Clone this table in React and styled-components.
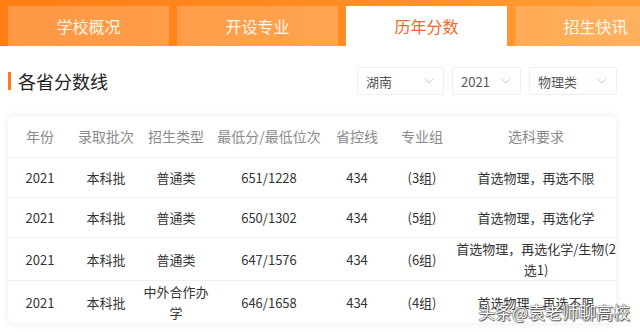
import React from "react";
import styled, { createGlobalStyle } from "styled-components";

const Global = createGlobalStyle`
  html, body { margin: 0; padding: 0; background: #fff; }
  body { font-family: "Noto Sans CJK SC", "Noto Sans", sans-serif; }
`;

const Page = styled.div`
  position: relative;
  width: 640px;
  height: 332px;
  overflow: hidden;
  background: #fff;
`;

const TabBar = styled.div`
  display: flex;
  gap: 8px;
  height: 46px;
  box-sizing: border-box;
  padding: 6px 0 0 8px;
  background: linear-gradient(90deg, #ff7d14 0%, #ff8c22 50%, #ff9d36 100%);
  overflow: hidden;
`;

const Tab = styled.div`
  flex: 0 0 161px;
  height: 40px;
  display: flex;
  align-items: center;
  justify-content: center;
  font-size: 16px;
  color: ${(p) => (p.$active ? "#f2692c" : "#fff6ec")};
  background: ${(p) => (p.$active ? "#fff" : "rgba(255,255,255,0.2)")};
`;

const TitleRow = styled.div`
  display: flex;
  align-items: center;
  justify-content: space-between;
  margin-top: 21px;
  padding: 0 23px 0 8px;
  height: 28px;
`;

const Title = styled.h2`
  margin: 0;
  display: flex;
  align-items: center;
  gap: 7px;
  font-size: 18px;
  font-weight: 400;
  color: #222;
  &::before {
    content: "";
    width: 3px;
    height: 18px;
    background: #ff7a1a;
  }
`;

const Filters = styled.div`
  display: flex;
  gap: 8px;
`;

const Select = styled.div`
  width: ${(p) => p.$w}px;
  height: 28px;
  box-sizing: border-box;
  border: 1px solid #efefef;
  border-radius: 2px;
  display: flex;
  align-items: center;
  justify-content: space-between;
  padding: 0 9px 0 8px;
  font-size: 13px;
  color: #555;
`;

const Chevron = () => (
  <svg width="10" height="6" viewBox="0 0 10 6" fill="none">
    <path d="M1 1l4 4 4-4" stroke="#c8c8c8" strokeWidth="1" />
  </svg>
);

const Card = styled.div`
  margin: 21px 24px 0 8px;
  border-radius: 6px;
  background: #fff;
  box-shadow: 0 0 8px rgba(0, 0, 0, 0.09);
  overflow: hidden;
`;

const Table = styled.table`
  width: 100%;
  border-collapse: collapse;
  table-layout: fixed;
`;

const Th = styled.th`
  height: 41px;
  padding: 0;
  font-size: 14px;
  font-weight: 400;
  color: #8a8a8a;
  text-align: center;
  border-bottom: 1px solid #f0f0f0;
  line-height: 21px;
`;

const Tr = styled.tr`
  & + & td { border-top: 1px solid #f0f0f0; }
`;

const Td = styled.td`
  height: 39px;
  padding: 0;
  font-size: 13px;
  line-height: 21px;
  color: #333;
  text-align: center;
  vertical-align: middle;
`;

const Watermark = styled.div`
  position: absolute;
  right: 10px;
  bottom: 10px;
  font-size: 17px;
  line-height: 20px;
  color: #fff;
  white-space: pre;
  text-shadow: 0 0 1px #333, 0 0 1px #333, 1px 1px 1px #555;
`;

const tabs = ["学校概况", "开设专业", "历年分数", "招生快讯"];
const widths = [64, 68, 72, 114, 62, 68, 160];
const heads = ["年份", "录取批次", "招生类型", "最低分/最低位次", "省控线", "专业组", "选科要求"];
const rows = [
  ["2021", "本科批", "普通类", "651/1228", "434", "(3组)", "首选物理，再选不限"],
  ["2021", "本科批", "普通类", "650/1302", "434", "(5组)", "首选物理，再选化学"],
  ["2021", "本科批", "普通类", "647/1576", "434", "(6组)", "首选物理，再选化学/生物(2选1)"],
  ["2021", "本科批", "中外合作办学", "646/1658", "434", "(4组)", "首选物理，再选不限"],
];

export default function App() {
  return (
    <Page>
      <Global />
      <TabBar>
        {tabs.map((t, i) => (
          <Tab key={t} $active={i === 2}>{t}</Tab>
        ))}
      </TabBar>
      <TitleRow>
        <Title>各省分数线</Title>
        <Filters>
          <Select $w={87}>湖南<Chevron /></Select>
          <Select $w={69}>2021<Chevron /></Select>
          <Select $w={88}>物理类<Chevron /></Select>
        </Filters>
      </TitleRow>
      <Card>
        <Table>
          <colgroup>
            {widths.map((w, i) => (
              <col key={i} style={{ width: w }} />
            ))}
          </colgroup>
          <thead>
            <tr>
              {heads.map((h) => (
                <Th key={h}>{h}</Th>
              ))}
            </tr>
          </thead>
          <tbody>
            {rows.map((r, i) => (
              <Tr key={i}>
                {r.map((c, j) => (
                  <Td key={j}>{c}</Td>
                ))}
              </Tr>
            ))}
          </tbody>
        </Table>
      </Card>
      <Watermark>头条@袁老师聊高校</Watermark>
    </Page>
  );
}
